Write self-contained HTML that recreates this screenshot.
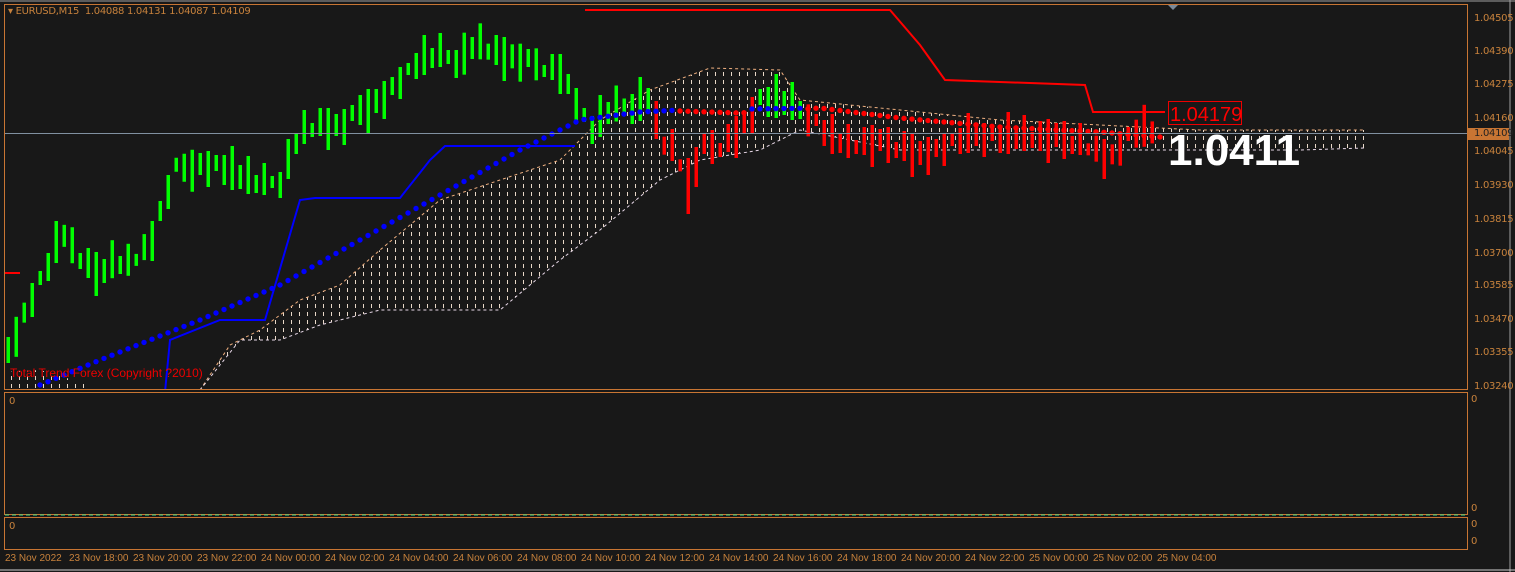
<!DOCTYPE html>
<html><head><meta charset="utf-8"><style>
html,body{margin:0;padding:0;background:#181818;width:1515px;height:572px;overflow:hidden;font-family:"Liberation Sans",sans-serif}
.ax{position:absolute;color:#c8823c;font-size:10px;font-family:"DejaVu Sans","Liberation Sans",sans-serif;letter-spacing:-0.3px}
.t{position:absolute;top:553px;color:#c8823c;font-size:10px;font-family:"Liberation Sans",sans-serif;white-space:nowrap}
</style></head><body>
<svg id="s" width="1515" height="572" style="position:absolute;left:0;top:0">
<defs>
<pattern id="vl" width="8" height="8" patternUnits="userSpaceOnUse">
<line x1="3.5" y1="0" x2="3.5" y2="4" stroke="#e8d8c8" stroke-width="1"/>
</pattern>
<clipPath id="main"><rect x="5" y="5" width="1461" height="384"/></clipPath>
</defs>
<line x1="0" y1="1" x2="1515" y2="1" stroke="#a0a0a0"/>
<line x1="1510" y1="0" x2="1510" y2="572" stroke="#a0a0a0"/>
<line x1="0" y1="570" x2="1515" y2="570" stroke="#d0d0d0"/>
<rect x="4.5" y="4.5" width="1463" height="385" fill="none" stroke="#c87533"/>
<rect x="4.5" y="392.5" width="1463" height="122" fill="none" stroke="#c87533"/>
<rect x="4.5" y="517.5" width="1463" height="32" fill="none" stroke="#c87533"/>
<line x1="5" y1="515" x2="1467" y2="515" stroke="#3ddc84" stroke-dasharray="4,3"/>
<polygon points="1168,5 1178,5 1173,10" fill="#7a8898"/>
<g id="g" clip-path="url(#main)"></g>
<line x1="5" y1="133.5" x2="1467" y2="133.5" stroke="#8090a0"/>
<rect x="1168.5" y="101.5" width="73" height="23" fill="none" stroke="#e00"/>
<text x="1170" y="121" fill="#f00" font-size="20" font-family="Liberation Sans">1.04179</text>
<text x="1168" y="165" fill="#fff" font-size="44" font-weight="bold" font-family="Liberation Sans">1.0411</text>
<text x="10" y="377" fill="#e00" font-size="12" font-family="Liberation Sans">Total Trend Forex (Copyright ?2010)</text>
<rect x="1467" y="128" width="42" height="12" fill="#c87533"/>
</svg>
<div class="ax" style="left:8px;top:6px">&#9662; EURUSD,M15&nbsp; 1.04088 1.04131 1.04087 1.04109</div>
<div class="ax" style="left:1474px;top:13px">1.04505</div>
<div class="ax" style="left:1474px;top:46px">1.04390</div>
<div class="ax" style="left:1474px;top:79px">1.04275</div>
<div class="ax" style="left:1474px;top:113px">1.04160</div>
<div class="ax" style="left:1474px;top:128px;color:#222">1.04109</div>
<div class="ax" style="left:1474px;top:146px">1.04045</div>
<div class="ax" style="left:1474px;top:180px">1.03930</div>
<div class="ax" style="left:1474px;top:214px">1.03815</div>
<div class="ax" style="left:1474px;top:248px">1.03700</div>
<div class="ax" style="left:1474px;top:280px">1.03585</div>
<div class="ax" style="left:1474px;top:314px">1.03470</div>
<div class="ax" style="left:1474px;top:347px">1.03355</div>
<div class="ax" style="left:1474px;top:381px">1.03240</div>
<div class="ax" style="left:1471px;top:394px">0</div>
<div class="ax" style="left:1471px;top:503px">0</div>
<div class="ax" style="left:1471px;top:519px">0</div>
<div class="ax" style="left:1471px;top:536px">0</div>
<div class="ax" style="left:9px;top:396px">0</div>
<div class="ax" style="left:9px;top:521px">0</div>
<div class="t" style="left:5px">23 Nov 2022</div>
<div class="t" style="left:69px">23 Nov 18:00</div>
<div class="t" style="left:133px">23 Nov 20:00</div>
<div class="t" style="left:197px">23 Nov 22:00</div>
<div class="t" style="left:261px">24 Nov 00:00</div>
<div class="t" style="left:325px">24 Nov 02:00</div>
<div class="t" style="left:389px">24 Nov 04:00</div>
<div class="t" style="left:453px">24 Nov 06:00</div>
<div class="t" style="left:517px">24 Nov 08:00</div>
<div class="t" style="left:581px">24 Nov 10:00</div>
<div class="t" style="left:645px">24 Nov 12:00</div>
<div class="t" style="left:709px">24 Nov 14:00</div>
<div class="t" style="left:773px">24 Nov 16:00</div>
<div class="t" style="left:837px">24 Nov 18:00</div>
<div class="t" style="left:901px">24 Nov 20:00</div>
<div class="t" style="left:965px">24 Nov 22:00</div>
<div class="t" style="left:1029px">25 Nov 00:00</div>
<div class="t" style="left:1093px">25 Nov 02:00</div>
<div class="t" style="left:1157px">25 Nov 04:00</div>
<script>
var NS="http://www.w3.org/2000/svg",g=document.getElementById("g");
function el(t,a){var e=document.createElementNS(NS,t);for(var k in a)e.setAttribute(k,a[k]);g.appendChild(e);return e;}
function interp(pts,x){for(var i=1;i<pts.length;i++){if(x<=pts[i][0]){var a=pts[i-1],b=pts[i];return a[1]+(b[1]-a[1])*(x-a[0])/(b[0]-a[0]);}}return pts[pts.length-1][1];}
function P(a){return a.map(function(p){return p.join(",")}).join(" ");}
var up=[[200,390],[230,345],[260,330],[300,300],[340,285],[380,250],[440,200],[500,180],[560,160],[600,120],[650,90],[710,68],[780,70],[800,100],[880,108],[1000,120],[1100,125],[1200,130],[1320,130],[1365,130]];
var lo=[[200,390],[240,340],[280,340],[320,325],[380,310],[440,310],[500,310],[560,260],[600,230],[660,180],[700,160],[760,150],[800,130],[900,150],[1000,150],[1100,150],[1200,150],[1300,150],[1365,148]];
el("polygon",{points:P(up.concat(lo.slice().reverse())),fill:"url(#vl)"});
el("polyline",{points:P(up),fill:"none",stroke:"#f0b080","stroke-dasharray":"3,3"});
el("polyline",{points:P(lo),fill:"none",stroke:"#e8d8e8","stroke-dasharray":"3,3"});
el("polygon",{points:"5,372 40,370 90,385 90,390 5,390",fill:"url(#vl)"});
el("polyline",{points:"585,10 890,10 920,45 945,80 1085,85 1093,112 1165,112",fill:"none",stroke:"#f00","stroke-width":2});
el("line",{x1:5,y1:273,x2:20,y2:273,stroke:"#f00","stroke-width":2});
el("polyline",{points:"165,392 170,340 220,320 265,320 300,200 315,198 400,198 430,160 445,146 575,146",fill:"none",stroke:"#00f","stroke-width":2});
var cp=[[8,350],[30,300],[50,260],[62,230],[75,255],[95,275],[110,260],[130,262],[150,245],[165,200],[175,170],[195,165],[220,165],[240,175],[260,185],[280,180],[300,130],[320,125],[340,130],[360,110],[380,100],[400,80],[420,60],[440,55],[460,60],[475,40],[490,50],[510,60],[540,65],[560,70],[575,100],[590,130],[610,110],[630,105],[650,95],[660,140],[675,150],[690,190],[700,150],[720,145],[740,130],[760,100],[780,100],[800,110],[815,120],[830,135],[850,145],[870,145],[900,145],[920,155],[940,150],[960,140],[980,135],[1000,135],[1020,135],[1040,140],[1060,140],[1080,140],[1095,150],[1110,160],[1125,140],[1140,130],[1155,133]];
for(var x=8;x<=1156;x+=8){
 var y=interp(cp,x),h=6+((x*37)%17),off=((x*13)%11)-5;
 var green=(x<656)||(x>=760&&x<805);
 if(x>=684&&x<=692){y=190;h=28;}
 var c=green?"#00ff00":"#ff0000";
 el("rect",{x:x-1.5,y:y-h+off,width:3.5,height:2*h,fill:c});
}
var bd=[[40,385],[100,360],[200,320],[280,285],[360,240],[440,195],[520,150],[580,120],[640,112],[680,110],[820,108]];
var rd=[[680,111],[740,113],[820,108],[900,118],[1000,127],[1100,132],[1160,137]];
for(var x=40;x<=1160;x+=8){
 var red=(x>=680&&x<750)||(x>=805);
 var y=red?interp(rd,x):interp(bd,x);
 el("circle",{cx:x,cy:y,r:2.7,fill:red?"#f00":"#00f"});
}
</script>
</body></html>
